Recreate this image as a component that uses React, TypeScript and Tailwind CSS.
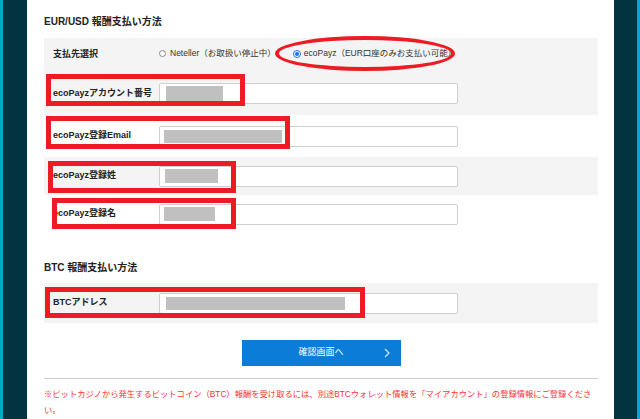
import React from "react";

const font = { fontFamily: '"Liberation Sans", "Noto Sans CJK JP", sans-serif' };

function Field({ w, h = 14, ml = 7 }: { w: number; h?: number; ml?: number }) {
  return (
    <div className="w-[299px] h-[21px] bg-white border border-[#cfcfcf] rounded-[2px] flex items-center">
      <div className="bg-[#c0c0c0]" style={{ width: w, height: h, marginLeft: ml }} />
    </div>
  );
}

function Row({ label, gray, h, children }: { label: string; gray?: boolean; h: string; children: React.ReactNode }) {
  return (
    <div className={`flex items-center ${h} ${gray ? "bg-[#f4f4f4]" : "bg-white"}`}>
      <div className="w-[115px] pl-[9px] text-[9px] font-bold text-[#222] whitespace-nowrap">{label}</div>
      {children}
    </div>
  );
}

export default function App() {
  return (
    <div className="relative flex w-[640px] h-[419px] overflow-hidden bg-white" style={font}>
      <div className="flex h-full">
        <div className="w-[3px] bg-[#00a9c9]" />
        <div className="w-[24px] bg-[#023440]" />
      </div>
      <div className="flex-1 bg-white pl-[17px] pr-[16px] pt-[15px]">
        <div className="text-[10px] leading-[14px] font-bold text-[#222]">EUR/USD 報酬支払い方法</div>
        <div className="mt-[9px]">
          <Row label="支払先選択" gray h="h-[34px]">
            <div className="flex items-center text-[8.5px] text-[#333] mt-[-3px]">
              <span className="w-[7px] h-[7px] rounded-full border border-[#888] bg-white mr-[4px]" />
              <span>Neteller（お取扱い停止中）</span>
              <span className="w-[8px] h-[8px] rounded-full border border-[#1a73e8] bg-white flex items-center justify-center ml-[17px] mr-[3px]">
                <span className="w-[4px] h-[4px] rounded-full bg-[#1a73e8]" />
              </span>
              <span>ecoPayz（EUR口座のみお支払い可能）</span>
            </div>
          </Row>
          <Row label="ecoPayzアカウント番号" gray h="h-[43px]">
            <Field w={57} h={15} ml={6} />
          </Row>
          <Row label="ecoPayz登録Email" h="h-[42px]">
            <Field w={118} h={13} ml={4} />
          </Row>
          <Row label="ecoPayz登録姓" gray h="h-[38px]">
            <Field w={53} ml={5} />
          </Row>
          <Row label="ecoPayz登録名" h="h-[38px]">
            <Field w={51} ml={4} />
          </Row>
        </div>

        <div className="mt-[28px] text-[10px] leading-[14px] font-bold text-[#222]">BTC 報酬支払い方法</div>
        <div className="mt-[8px]">
          <Row label="BTCアドレス" gray h="h-[40px]">
            <Field w={179} h={13} ml={6} />
          </Row>
        </div>

        <div className="flex justify-center mt-[17px]">
          <div className="w-[159px] h-[26px] bg-[#0b7dd8] flex items-center text-white text-[9px]">
            <div className="w-[28px]" />
            <div className="flex-1 text-center">確認画面へ</div>
            <div className="w-[28px] flex justify-center">
              <svg width="6" height="10" viewBox="0 0 6 10">
                <path d="M1 1 L5 5 L1 9" fill="none" stroke="#cfe6fb" strokeWidth="1.2" />
              </svg>
            </div>
          </div>
        </div>

        <div className="mt-[12px] border-t border-[#cccccc]" />
        <div className="mt-[7px] text-[8.3px] leading-[16px] text-[#ff3333]">
          ※ビットカジノから発生するビットコイン（BTC）報酬を受け取るには、別途BTCウォレット情報を「マイアカウント」の登録情報にご登録ください。
        </div>
      </div>
      <div className="flex h-full">
        <div className="w-[23px] bg-[#023440]" />
        <div className="w-[3px] bg-[#00a9c9]" />
      </div>

      {/* annotations */}
      <div className="absolute left-[46px] top-[74px] w-[199px] h-[32px] border-[5px] border-[#ed1c24]" />
      <div className="absolute left-[46px] top-[116px] w-[244px] h-[33px] border-[5px] border-[#ed1c24]" />
      <div className="absolute left-[48px] top-[161px] w-[188px] h-[32px] border-[5px] border-[#ed1c24]" />
      <div className="absolute left-[52px] top-[198px] w-[184px] h-[31px] border-[5px] border-[#ed1c24]" />
      <div className="absolute left-[45px] top-[287px] w-[320px] h-[31px] border-[5px] border-[#ed1c24]" />
      <div className="absolute left-[275px] top-[36px] w-[180px] h-[35px] rounded-[50%] border-[4px] border-[#ed1c24]" />
    </div>
  );
}
